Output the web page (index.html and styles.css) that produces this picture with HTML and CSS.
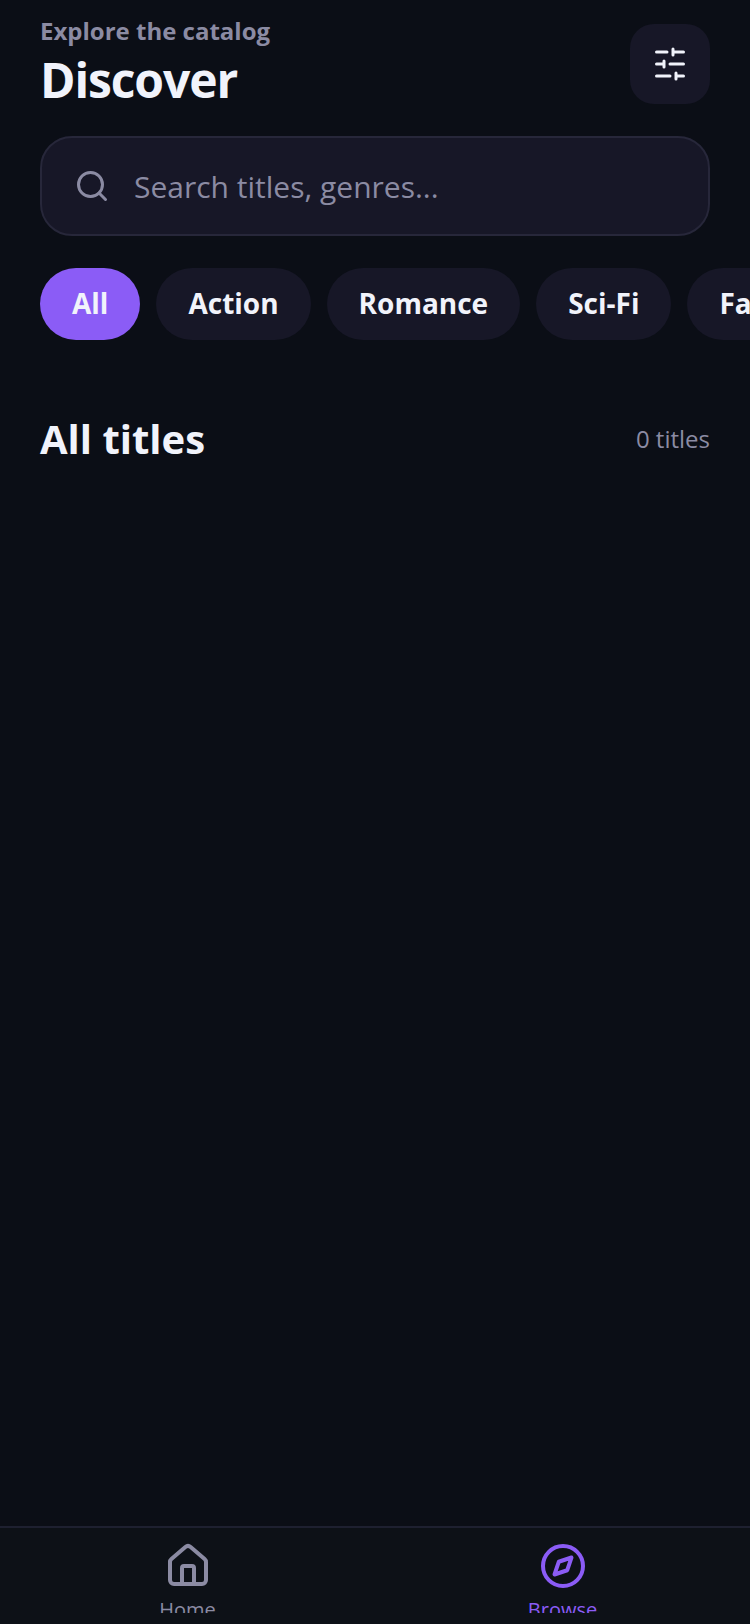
FILE: index.html
```html
<!DOCTYPE html>
<html lang="en">

<head>
    <meta charset="UTF-8">
    <meta name="viewport" content="width=device-width, initial-scale=1.0">
    <title>Discover</title>
    <link rel="stylesheet" href="styles.css">
</head>

<body>

    <div class="app">
        <main class="content">
            <header class="top-bar">
                <div class="top-text">
                    <p class="kicker">Explore the catalog</p>
                    <h1>Discover</h1>
                </div>
                <button class="filter-btn" type="button" aria-label="Filters">
                    <svg width="36" height="36" viewBox="0 0 24 24" fill="none" stroke="#f1f3fb" stroke-width="2" stroke-linecap="round">
                        <path d="M21 4h-7M10 4H3M21 12h-9M8 12H3M21 20h-5M12 20H3M14 2v4M8 10v4M16 18v4"/>
                    </svg>
                </button>
            </header>

            <div class="search-box">
                <svg width="36" height="36" viewBox="0 0 24 24" fill="none" stroke="#8b8ba3" stroke-width="2" stroke-linecap="round">
                    <circle cx="11" cy="11" r="8"/>
                    <path d="M21 21l-4.300-4.300"/>
                </svg>
                <span class="placeholder">Search titles, genres...</span>
            </div>

            <div class="chips">
                <span class="chip active">All</span>
                <span class="chip">Action</span>
                <span class="chip">Romance</span>
                <span class="chip">Sci-Fi</span>
                <span class="chip">Fantasy</span>
            </div>

            <div class="section-head">
                <h2>All titles</h2>
                <span class="count">0 titles</span>
            </div>
        </main>

        <nav class="tab-bar">
            <div class="tab">
                <svg width="48" height="48" viewBox="0 0 24 24" fill="none" stroke="#8b8ba3" stroke-width="2" stroke-linecap="round" stroke-linejoin="round">
                    <path d="M15 21v-8a1 1 0 0 0-1-1h-4a1 1 0 0 0-1 1v8"/>
                    <path d="M3 10a2 2 0 0 1 .7-1.500l7-6a2 2 0 0 1 2.600 0l7 6a2 2 0 0 1 .7 1.500v9a2 2 0 0 1-2 2H5a2 2 0 0 1-2-2z"/>
                </svg>
                <span class="tab-label">Home</span>
            </div>
            <div class="tab tab-active">
                <svg width="48" height="48" viewBox="0 0 24 24" fill="none" stroke="#8b5cf6" stroke-width="2" stroke-linecap="round" stroke-linejoin="round">
                    <circle cx="12" cy="12" r="10"/>
                    <path d="M16.240 7.760l-2.120 6.360-6.360 2.120 2.120-6.360z"/>
                </svg>
                <span class="tab-label">Browse</span>
            </div>
        </nav>
    </div>

</body>

</html>
```

FILE: styles.css
```css
* {
    margin: 0;
    padding: 0;
    box-sizing: border-box;
}

body {
    font-family: "Open Sans", sans-serif;
    background-color: #0b0e16;
    color: #f1f3fb;
    width: 750px;
    height: 1624px;
    overflow: hidden;
}

.app {
    display: flex;
    flex-direction: column;
    height: 1624px;
}

.content {
    flex: 1;
    min-height: 0;
    overflow: hidden;
}

.top-bar {
    display: flex;
    justify-content: space-between;
    align-items: flex-start;
    padding: 10px 40px 0;
}

.kicker {
    font-size: 24px;
    line-height: 42px;
    font-weight: 700;
    color: #8b8ba3;
}

h1 {
    font-size: 48px;
    line-height: 56px;
    font-weight: 700;
    letter-spacing: -1.1px;
}

.filter-btn {
    width: 80px;
    height: 80px;
    margin-top: 14px;
    border: none;
    border-radius: 24px;
    background-color: #171727;
    display: flex;
    justify-content: center;
    align-items: center;
}

.search-box {
    display: flex;
    align-items: center;
    gap: 24px;
    height: 100px;
    margin: 28px 40px 0;
    padding: 0 32px;
    background-color: #171727;
    border: 2px solid #27273a;
    border-radius: 32px;
}

.placeholder {
    font-size: 30px;
    color: #8b8ba3;
}

.chips {
    display: flex;
    gap: 16px;
    margin-top: 32px;
    padding-left: 40px;
    overflow: hidden;
}

.chip {
    flex-shrink: 0;
    height: 72px;
    line-height: 70px;
    padding: 0 32px;
    border-radius: 36px;
    background-color: #171727;
    font-size: 28px;
    font-weight: 700;
}

.chip.active {
    background-color: #8b5cf6;
}

.section-head {
    display: flex;
    justify-content: space-between;
    align-items: center;
    margin-top: 71px;
    padding: 0 40px;
}

h2 {
    font-size: 40px;
    line-height: 56px;
    font-weight: 700;
}

.count {
    margin-bottom: 2px;
    font-size: 24px;
    color: #8b8ba3;
}

.tab-bar {
    display: flex;
    height: 98px;
    background-color: #0d1117;
    border-top: 2px solid #1e2030;
}

.tab {
    flex: 1;
    display: flex;
    flex-direction: column;
    align-items: center;
    padding-top: 14px;
}

.tab-label {
    display: block;
    height: 18px;
    margin-top: 5px;
    overflow: hidden;
    font-size: 20px;
    line-height: 30px;
    color: #8b8ba3;
}

.tab-active .tab-label {
    color: #8b5cf6;
}
```
